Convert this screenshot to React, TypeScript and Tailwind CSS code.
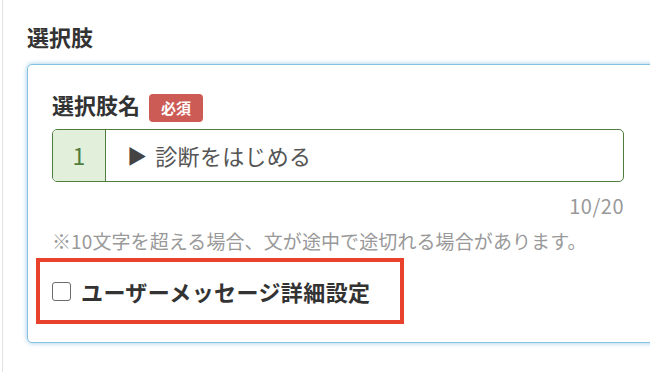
import React from 'react';

const font = { fontFamily: '"Noto Sans CJK JP", "Noto Sans", sans-serif' };

function CharCounter({ count, max }: { count: number; max: number }) {
    return (
        <div className="mt-[14px] text-right text-[20px] leading-[20px] tracking-[0.5px] text-[#999]">
            {count}/{max}
        </div>
    );
}

export default function App() {
    return (
        <div className="h-[372px] w-[650px] overflow-hidden bg-white" style={font}>
            <div className="ml-[2px] h-full border-l border-[#e2e2e2] pl-[24px] pt-[25px]">
                <h2 className="text-[22px] font-bold leading-[22px] text-[#333]">選択肢</h2>

                <div className="mt-[17px] w-[660px] rounded-[5px] border border-[#86c3e2] bg-white pb-[18px] pl-[24px] pt-[28px] shadow-[0_0_5px_rgba(90,165,215,0.6)]">
                    <div className="flex items-start gap-[9px]">
                        <span className="text-[22px] font-bold leading-[22px] text-[#333]">選択肢名</span>
                        <span className="mt-[1px] flex h-[28px] w-[54px] items-center justify-center rounded-[4px] bg-[#cc5b56] text-[15px] font-bold text-white">
                            必須
                        </span>
                    </div>

                    <div className="w-[572px]">
                        <div className="mt-[7px] flex h-[53px] overflow-hidden rounded-[5px] border border-[#4f7d3d]">
                            <div className="flex w-[53px] items-center justify-center border-r border-[#4f7d3d] bg-[#e2efdb] text-[23px] text-[#4f7d3d]">
                                1
                            </div>
                            <div className="flex flex-1 items-center pl-[21px] text-[22px] tracking-[0.3px] text-[#555]">
                                <span className="mr-[8px] text-[20px] text-[#444]">▶</span>診断をはじめる
                            </div>
                        </div>
                        <CharCounter count={10} max={20} />
                    </div>

                    <p className="mt-[15px] text-[19px] leading-[19px] tracking-[0.1px] text-[#999]">
                        ※10文字を超える場合、文が途中で途切れる場合があります。
                    </p>

                    <div className="ml-[-16px] mt-[8px] flex h-[66px] w-[368px] items-center border-4 border-[#e8412c] pl-[12px]">
                        <label className="flex items-center gap-[10px]">
                            <input
                                type="checkbox"
                                className="h-[19px] w-[19px] appearance-none rounded-[3px] border-[1.5px] border-[#6b6b6b] bg-white"
                            />
                            <span className="text-[22px] font-bold leading-[22px] tracking-[0.4px] text-[#333]">ユーザーメッセージ詳細設定</span>
                        </label>
                    </div>
                </div>
            </div>
        </div>
    );
}
